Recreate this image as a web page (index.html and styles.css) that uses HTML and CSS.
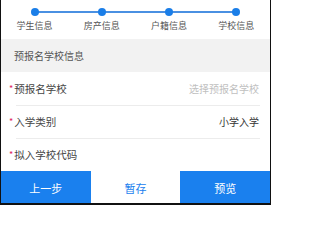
FILE: index.html
```html
<!DOCTYPE html>
<html lang="zh">
<head>
<meta charset="utf-8">
<link rel="stylesheet" href="styles.css">
</head>
<body>
<div class="frame">
  <div class="steps">
    <div class="step first"><span class="dot"></span><span class="step-label">学生信息</span></div>
    <div class="step"><span class="dot"></span><span class="step-label">房产信息</span></div>
    <div class="step"><span class="dot"></span><span class="step-label">户籍信息</span></div>
    <div class="step last"><span class="dot"></span><span class="step-label">学校信息</span></div>
  </div>
  <div class="section-title">预报名学校信息</div>
  <div class="form">
    <div class="row">
      <span class="label"><span class="req">*</span>预报名学校</span>
      <span class="value placeholder">选择预报名学校</span>
    </div>
    <div class="row">
      <span class="label"><span class="req">*</span>入学类别</span>
      <span class="value">小学入学</span>
    </div>
    <div class="row">
      <span class="label"><span class="req">*</span>拟入学校代码</span>
      <span class="value"></span>
    </div>
  </div>
  <div class="actions">
    <button class="btn primary">上一步</button>
    <button class="btn plain">暂存</button>
    <button class="btn primary">预览</button>
  </div>
</div>
</body>
</html>
```

FILE: styles.css
```css
html, body {
  margin: 0;
  padding: 0;
  background: #fff;
}
body {
  font-family: "Noto Sans CJK SC", "Noto Sans", sans-serif;
}
.frame {
  width: 269px;
  height: 203px;
  background: #fff;
  border-left: 1px solid #111;
  border-right: 1px solid #111;
  border-bottom: 2px solid #111;
  display: flex;
  flex-direction: column;
  overflow: hidden;
}
.steps {
  height: 39px;
  flex: none;
  display: flex;
}
.step {
  flex: 1;
  position: relative;
  display: flex;
  flex-direction: column;
  align-items: center;
}
.step::before,
.step::after {
  content: "";
  position: absolute;
  top: 11px;
  height: 2px;
  width: 50%;
  background: #4a90e2;
}
.step::before { left: 0; }
.step::after { right: 0; }
.step.first::before,
.step.last::after { display: none; }
.dot {
  position: relative;
  z-index: 1;
  width: 8px;
  height: 8px;
  margin-top: 8px;
  border-radius: 50%;
  background: #1a7ee8;
}
.step-label {
  margin-top: 4px;
  font-size: 9px;
  line-height: 12px;
  color: #555;
}
.section-title {
  height: 33px;
  flex: none;
  line-height: 33px;
  background: #f2f2f2;
  padding-left: 13px;
  font-size: 10px;
  color: #555;
}
.form {
  flex: 1;
  display: flex;
  flex-direction: column;
}
.row {
  height: 33px;
  flex: none;
  position: relative;
  display: flex;
  align-items: center;
  justify-content: space-between;
  padding: 0 11px 0 8px;
}
.row + .row::before {
  content: "";
  position: absolute;
  top: 0;
  left: 15px;
  right: 10px;
  height: 1px;
  background: #ececec;
}
.label {
  font-size: 10.5px;
  color: #444;
}
.req {
  color: #e0245e;
  font-size: 9px;
  margin-right: 1px;
  vertical-align: 1px;
}
.value {
  font-size: 10px;
  color: #333;
}
.placeholder {
  color: #c0c0c0;
}
.actions {
  height: 33px;
  flex: none;
  display: flex;
}
.btn {
  flex: 1;
  border: none;
  margin: 0;
  padding: 0;
  font-family: inherit;
  font-size: 11px;
}
.btn.primary {
  background: #1a80ee;
  color: #fff;
}
.btn.plain {
  background: #fff;
  color: #1a80ee;
}
```
